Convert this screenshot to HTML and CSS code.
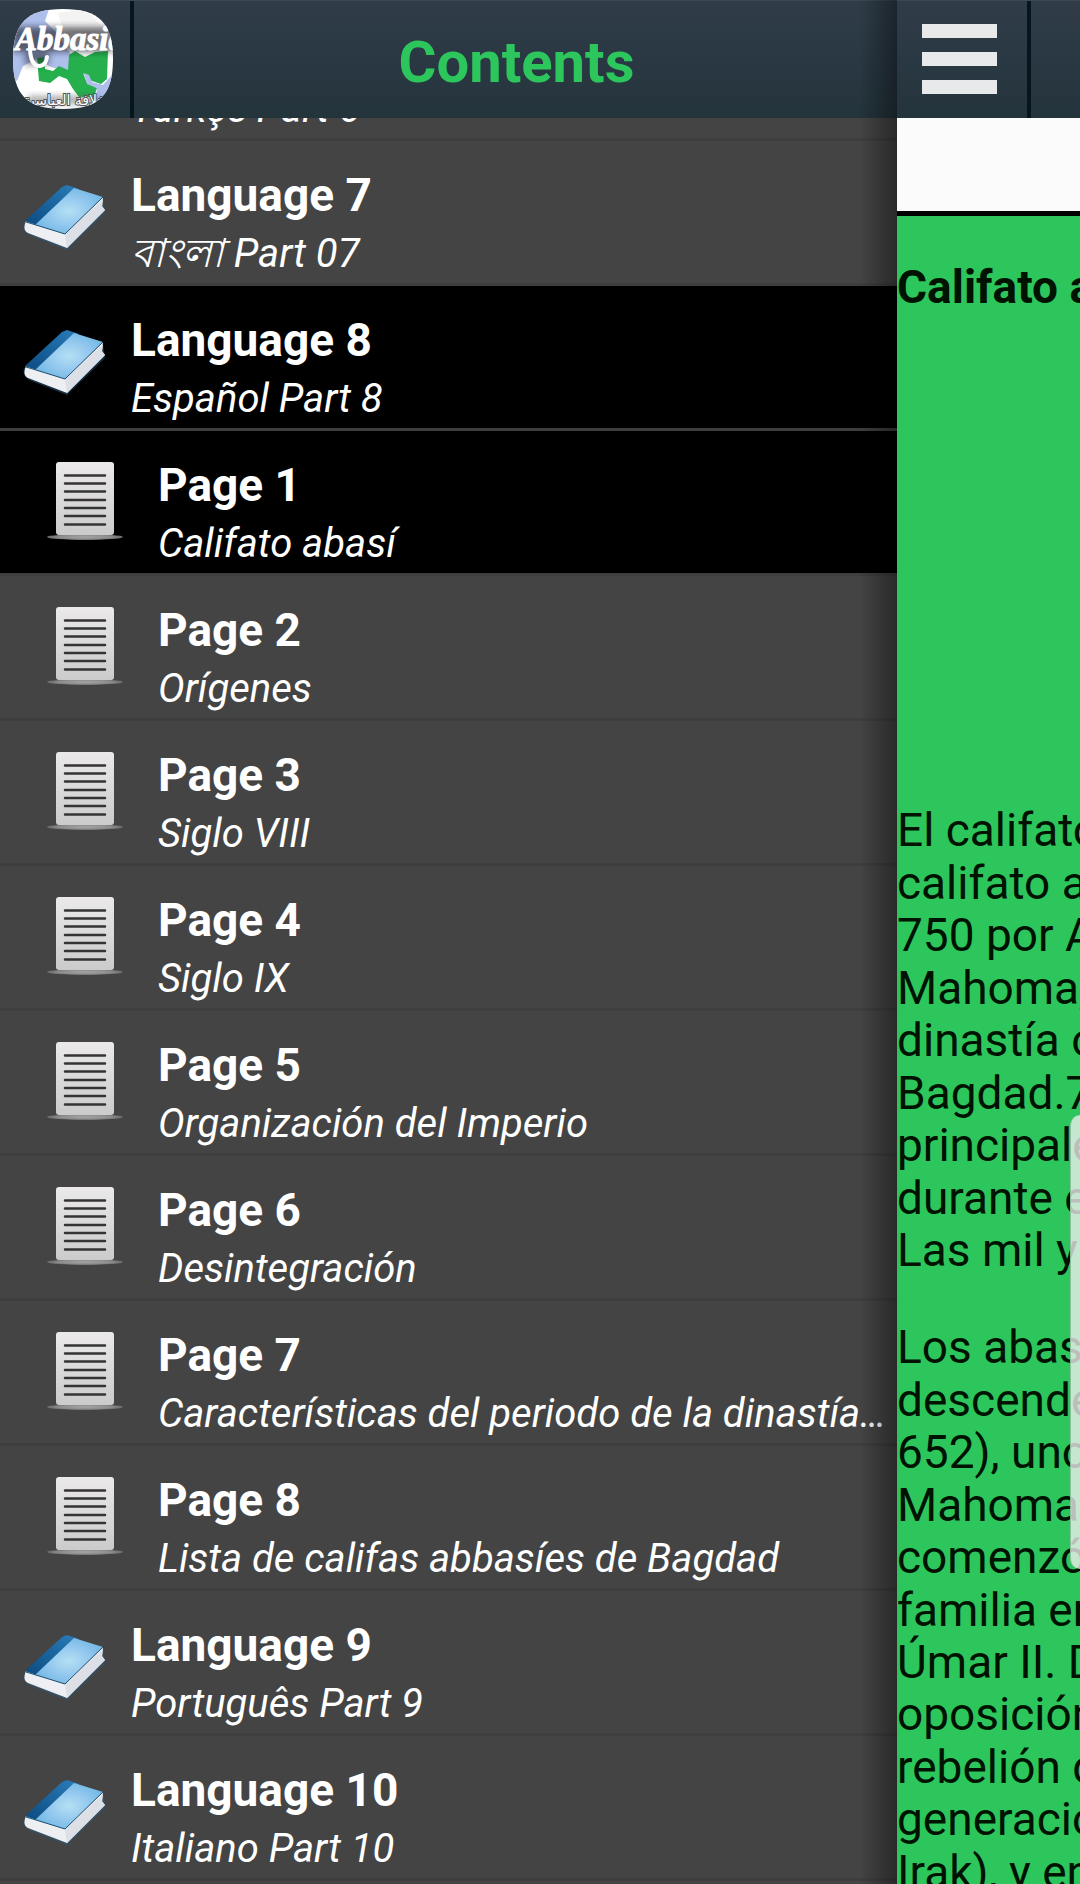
FILE: index.html
```html
<!DOCTYPE html>
<html lang="es">
<head>
    <meta charset="UTF-8">
    <meta name="viewport" content="width=device-width, initial-scale=1.0">
    <title>Contents</title>
    <link rel="stylesheet" href="styles.css">
</head>
<body>
    <!-- shared icons -->
    <svg class="sprite" aria-hidden="true">
        <defs>
            <radialGradient id="coverFill" cx="0.5" cy="0.5" r="0.6">
                <stop offset="0" stop-color="#b4e0f2"/>
                <stop offset="0.5" stop-color="#94c8ef"/>
                <stop offset="1" stop-color="#6cb6e2"/>
            </radialGradient>
            <linearGradient id="spineFill" x1="0" y1="1" x2="1" y2="0">
                <stop offset="0" stop-color="#0b4a80"/>
                <stop offset="1" stop-color="#2a7dba"/>
            </linearGradient>
            <linearGradient id="paperFill" x1="0" y1="0" x2="0" y2="1">
                <stop offset="0" stop-color="#ebe9ea"/>
                <stop offset="1" stop-color="#cbcbcb"/>
            </linearGradient>
            <radialGradient id="standFill">
                <stop offset="0" stop-color="#a5a5a5"/>
                <stop offset="0.7" stop-color="#8c8c8c"/>
                <stop offset="1" stop-color="#6a6a6a"/>
            </radialGradient>
        </defs>
        <symbol id="book" viewBox="0 0 84 66">
            <path d="M1 38 Q-1 46 6 50 L44 65 L82 28 L80 14 L44 50 Z" fill="#275f87" opacity="0.5"/>
            <path d="M3 36 Q-1 45 5 48 L44 63 L82 25 L79 21 L80 12 L42 48 Z" fill="#eeeff3"/>
            <path d="M42 50 L80 14 L79 22 L82 25 L44 63 Z" fill="#dddfe6"/>
            <path d="M2 36 L39 2 L44 0 L56 4 L14 40 Z" fill="url(#spineFill)"/>
            <path d="M12 40 L51 3 L80 12 L42 49 Z" fill="url(#coverFill)"/>
            <path d="M3 37 L13 40 L42 49 L80 12" stroke="#214d6d" stroke-width="1" fill="none"/>
        </symbol>
        <symbol id="sheet" viewBox="0 0 76 78">
            <ellipse cx="38" cy="75" rx="38" ry="3" fill="url(#standFill)"/>
            <rect x="9" y="0" width="58" height="73" rx="3" fill="url(#paperFill)"/>
            <path d="M18 13.500H58M18 21.500H58M18 29.500H58M18 38H58M18 46H58M18 54H58M18 62.500H58" stroke="#353333" stroke-width="2.500" stroke-linecap="round"/>
        </symbol>
    </svg>

    <div class="app">
        <nav class="drawer">
            <header class="bar">
                <a class="bar-cell" href="#" aria-label="Abbasid">
                    <svg class="logo" viewBox="0 0 100 100">
                        <defs>
                            <clipPath id="logoClip">
                                <path d="M50 0 C86 0 100 14 100 50 C100 86 86 100 50 100 C14 100 0 86 0 50 C0 14 14 0 50 0 Z"/>
                            </clipPath>
                            <filter id="soft" x="-30%" y="-60%" width="160%" height="220%">
                                <feGaussianBlur stdDeviation="3"/>
                            </filter>
                        </defs>
                        <g clip-path="url(#logoClip)">
                            <rect width="100" height="100" fill="#ffffff"/>
                            <path d="M0 0H36L32 12L42 22L54 40L62 50L55 63L38 58L24 50L10 57L4 72L0 70Z" fill="#aebfec"/>
                            <path d="M45 4L72 0L92 20L76 28L50 20Z" fill="#f3f3f3"/>
                            <path d="M24 49L31 48L32 60L40 62L46 57L55 61L56 46L62 42L72 48L82 43L95 42L94 70L88 75L76 71L70 64L74 74L84 79L81 88L66 88L60 80L54 70L46 67L37 74L26 72Z" fill="#25b04d"/>
                            <path d="M71 64L76 66L79 73L90 76L100 65V90L83 89L84 79L74 75Z" fill="#aebfec"/>
                            <rect x="0" y="18" width="100" height="25" fill="#14181e" opacity="0.6" filter="url(#soft)"/>
                            <rect x="12" y="42" width="24" height="14" fill="#14181e" opacity="0.5" filter="url(#soft)"/>
                            <rect x="15" y="87" width="72" height="8" fill="#555555" opacity="0.5" filter="url(#soft)"/>
                            <path d="M17 38 Q17 57 27 57 Q33 56 34 48" fill="none" stroke="#ffffff" stroke-width="4" stroke-linecap="round"/>
                            <text class="logo-name" x="2" y="41">Abbasid</text>
                            <text class="logo-arabic" x="56" y="96">الخلافة العباسية</text>
                        </g>
                    </svg>
                </a>
                <h1 class="bar-title">Contents</h1>
            </header>

            <div class="list-view">
                <ul class="list">
                    <li><a class="row" href="#">
                        <svg class="row-icon"><use href="#book"/></svg>
                        <span class="row-text"><b class="name">Language 6</b><i class="detail">Türkçe Part 6</i></span>
                    </a></li>
                    <li><a class="row" href="#">
                        <svg class="row-icon"><use href="#book"/></svg>
                        <span class="row-text"><b class="name">Language 7</b><i class="detail">বাংলা Part 07</i></span>
                    </a></li>
                    <li><a class="row active" href="#">
                        <svg class="row-icon"><use href="#book"/></svg>
                        <span class="row-text"><b class="name">Language 8</b><i class="detail">Español Part 8</i></span>
                    </a></li>
                    <li><a class="row page active" href="#">
                        <svg class="row-icon"><use href="#sheet"/></svg>
                        <span class="row-text"><b class="name">Page 1</b><i class="detail">Califato abasí</i></span>
                    </a></li>
                    <li><a class="row page" href="#">
                        <svg class="row-icon"><use href="#sheet"/></svg>
                        <span class="row-text"><b class="name">Page 2</b><i class="detail">Orígenes</i></span>
                    </a></li>
                    <li><a class="row page" href="#">
                        <svg class="row-icon"><use href="#sheet"/></svg>
                        <span class="row-text"><b class="name">Page 3</b><i class="detail">Siglo VIII</i></span>
                    </a></li>
                    <li><a class="row page" href="#">
                        <svg class="row-icon"><use href="#sheet"/></svg>
                        <span class="row-text"><b class="name">Page 4</b><i class="detail">Siglo IX</i></span>
                    </a></li>
                    <li><a class="row page" href="#">
                        <svg class="row-icon"><use href="#sheet"/></svg>
                        <span class="row-text"><b class="name">Page 5</b><i class="detail">Organización del Imperio</i></span>
                    </a></li>
                    <li><a class="row page" href="#">
                        <svg class="row-icon"><use href="#sheet"/></svg>
                        <span class="row-text"><b class="name">Page 6</b><i class="detail">Desintegración</i></span>
                    </a></li>
                    <li><a class="row page" href="#">
                        <svg class="row-icon"><use href="#sheet"/></svg>
                        <span class="row-text"><b class="name">Page 7</b><i class="detail">Características del periodo de la dinastía abasí</i></span>
                    </a></li>
                    <li><a class="row page" href="#">
                        <svg class="row-icon"><use href="#sheet"/></svg>
                        <span class="row-text"><b class="name">Page 8</b><i class="detail">Lista de califas abbasíes de Bagdad</i></span>
                    </a></li>
                    <li><a class="row" href="#">
                        <svg class="row-icon"><use href="#book"/></svg>
                        <span class="row-text"><b class="name">Language 9</b><i class="detail">Português Part 9</i></span>
                    </a></li>
                    <li><a class="row" href="#">
                        <svg class="row-icon"><use href="#book"/></svg>
                        <span class="row-text"><b class="name">Language 10</b><i class="detail">Italiano Part 10</i></span>
                    </a></li>
                </ul>
            </div>
        </nav>

        <main class="content">
            <header class="bar">
                <button class="bar-cell menu" type="button" aria-label="Menu">
                    <span class="menu-line"></span>
                    <span class="menu-line"></span>
                    <span class="menu-line"></span>
                </button>
            </header>
            <div class="banner"></div>
            <article class="article">
                <h2 class="article-title">Califato abasí</h2>
                <p>El califato<br>califato a<br>750 por A<br>Mahoma,<br>dinastía o<br>Bagdad.7<br>principales<br>durante el<br>Las mil y</p>
                <p>Los abasíes<br>descende<br>652), uno<br>Mahoma,<br>comenzó<br>familia en<br>Úmar II. D<br>oposición<br>rebelión d<br>generación<br>Irak), y en</p>
            </article>
            <div class="edge-handle"></div>
        </main>
    </div>
</body>
</html>
```

FILE: styles.css
```css
* {
    box-sizing: border-box;
}
body {
    font-family: Roboto, "Noto Sans", sans-serif;
    margin: 0;
    background-color: #444444;
}
.sprite {
    position: absolute;
    width: 0;
    height: 0;
}
.app {
    display: flex;
    height: 100vh;
    overflow: hidden;
}

/* top bars */
.bar {
    display: flex;
    flex: none;
    height: 118px;
    background: linear-gradient(#303d49, #2a3843 50%, #24343b);
    border-top: 1px solid #3b4953;
}
.bar-cell {
    display: flex;
    flex: none;
    align-items: center;
    justify-content: center;
    width: 134px;
    padding: 0 5px 2px 0;
    border: 0;
    border-right: 4px solid #07151d;
    background: none;
}
.logo {
    width: 100px;
    height: 100px;
}
.logo-name {
    font: italic bold 33px "Liberation Serif", serif;
    fill: #ffffff;
    stroke: #ffffff;
    stroke-width: 1px;
}
.logo-arabic {
    font: 14px "DejaVu Sans", sans-serif;
    fill: #ffffff;
    stroke: #555555;
    stroke-width: 2px;
    paint-order: stroke;
    text-anchor: middle;
}
.bar-title {
    flex: 1;
    margin: 0;
    padding-left: 2px;
    font-size: 58px;
    line-height: 122px;
    color: #2dc65d;
    text-align: center;
}

/* drawer */
.drawer {
    position: relative;
    display: flex;
    flex: 1;
    flex-direction: column;
    min-width: 0;
}
.drawer::after {
    content: "";
    position: absolute;
    top: 0;
    right: 0;
    bottom: 0;
    width: 38px;
    background: linear-gradient(to right, rgba(0, 0, 0, 0), rgba(0, 0, 0, 0.4));
    pointer-events: none;
}
.list-view {
    flex: 1;
    min-height: 0;
    overflow: hidden;
}
.list {
    margin: -122px 0 0;
    padding: 0;
    list-style: none;
}
.row {
    display: flex;
    align-items: flex-start;
    height: 145px;
    padding: 27px 10px 0 23px;
    border-bottom: 3px solid #3e3e3e;
    color: #ffffff;
    text-decoration: none;
}
.row.page {
    padding-left: 47px;
}
.row.active {
    background-color: #000000;
}
.row-icon {
    flex: none;
    width: 84px;
    height: 66px;
    margin: 17px 24px 0 0;
}
.page .row-icon {
    width: 76px;
    height: 78px;
    margin-top: 4px;
    margin-right: 35px;
}
.row-text {
    flex: 1;
    min-width: 0;
}
.name {
    display: block;
    font-size: 46px;
    line-height: 54px;
}
.detail {
    display: block;
    margin-top: 4px;
    overflow: hidden;
    font-size: 40px;
    line-height: 56px;
    white-space: nowrap;
    text-overflow: ellipsis;
}

/* page behind the drawer */
.content {
    position: relative;
    display: flex;
    flex: 0 0 183px;
    flex-direction: column;
    overflow: hidden;
}
.menu {
    flex-direction: column;
    gap: 14px;
    padding: 0 5px 2px 0;
}
.menu-line {
    width: 75px;
    height: 14px;
    background-color: #e7e9ea;
}
.banner {
    flex: none;
    height: 98px;
    background-color: #fbfbfb;
    border-bottom: 5px solid #000000;
}
.article {
    flex: 1;
    min-height: 0;
    overflow: hidden;
    background-color: #2dc65d;
    color: #001200;
    font-size: 46px;
    line-height: 1.14;
    white-space: nowrap;
}
.article p {
    margin: 0 0 45px;
}
.article-title {
    margin: 45px 0 491px;
    font-size: 46px;
}
.edge-handle {
    position: absolute;
    top: 1115px;
    right: 0;
    width: 10px;
    height: 454px;
    border-left: 1px solid #8fbf9e;
    border-radius: 12px 0 0 12px;
    background-color: rgba(240, 240, 240, 0.78);
}
```
